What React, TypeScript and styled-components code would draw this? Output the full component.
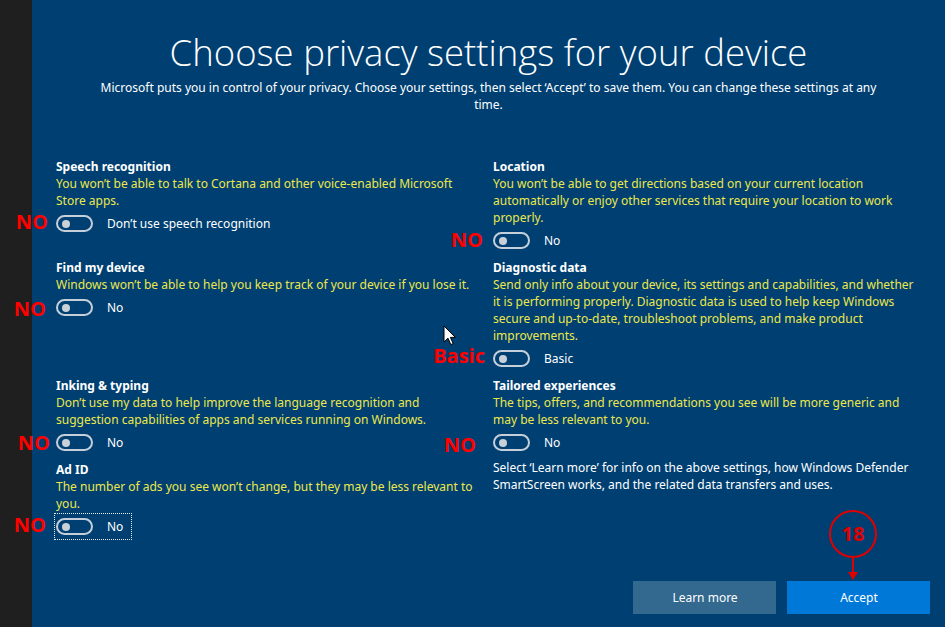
import React from "react";
import styled, { createGlobalStyle } from "styled-components";

const GlobalStyle = createGlobalStyle`
  html, body {
    margin: 0;
    padding: 0;
    background: #003f72;
  }
  body {
    font-family: "Noto Sans", "Open Sans", "Liberation Sans", sans-serif;
  }
`;

const Page = styled.div`
  display: flex;
  width: 945px;
  height: 627px;
  overflow: hidden;
`;

const Strip = styled.div`
  width: 32px;
  flex-shrink: 0;
  background: #1f1f1f;
`;

const Main = styled.div`
  position: relative;
  flex: 1;
  display: flex;
  flex-direction: column;
  background: #003f72;
  padding-top: 28px;
  color: #fff;
`;

const Title = styled.h1`
  margin: 0;
  font-family: "Open Sans", "Noto Sans", sans-serif;
  font-weight: 300;
  font-size: 36.5px;
  line-height: 48px;
  text-align: center;
  color: #fff;
`;

const Subtitle = styled.p`
  margin: 3px 0 0;
  font-size: 12px;
  line-height: 17px;
  text-align: center;
  white-space: pre-line;
`;

const Grid = styled.div`
  display: grid;
  grid-template-columns: 424px 424px;
  column-gap: 13px;
  row-gap: 5px;
  align-items: start;
  margin-top: 45px;
  padding-left: 24px;
`;

const Setting = styled.div`
  display: flex;
  flex-direction: column;
  align-items: flex-start;
`;

const SettingTitle = styled.div`
  font-size: 12px;
  line-height: 17px;
  font-weight: 700;
  color: #fff;
`;

const SettingDesc = styled.div`
  font-size: 12px;
  line-height: 17px;
  color: #ece84c;
  white-space: pre-line;
`;

const Note = styled.div`
  font-size: 12px;
  line-height: 17px;
  color: #fff;
  white-space: pre-line;
  margin-top: -2px;
`;

const ToggleRow = styled.div<{ $focused?: boolean }>`
  position: relative;
  display: inline-flex;
  align-items: center;
  margin-top: 1px;
  margin-left: -2px;
  padding: 4px 8px 4px 1px;
  border: 1px ${(p) => (p.$focused ? "dotted #e6ecf2" : "solid transparent")};
`;

const Switch = styled.span`
  position: relative;
  box-sizing: border-box;
  width: 37px;
  height: 17px;
  border: 2px solid #c5cfd9;
  border-radius: 9px;
`;

const Knob = styled.span`
  position: absolute;
  left: 4px;
  top: 2.5px;
  width: 8px;
  height: 8px;
  border-radius: 50%;
  background: #c9d1d8;
`;

const ToggleLabel = styled.span`
  margin-left: 14px;
  font-size: 12px;
  line-height: 17px;
  color: #fff;
`;

const Mark = styled.span<{ $gap: number; $dy: number }>`
  position: absolute;
  right: calc(100% - 1px + ${(p) => p.$gap}px);
  top: calc(50% - 13px + ${(p) => p.$dy}px);
  font-family: "Open Sans", "Noto Sans", sans-serif;
  font-weight: 700;
  font-size: 20px;
  line-height: 26px;
  color: #ff0000;
  white-space: nowrap;
`;

const Footer = styled.div`
  display: flex;
  justify-content: flex-end;
  gap: 11px;
  margin-top: auto;
  padding: 0 15px 13px 0;
`;

const Button = styled.button<{ $primary?: boolean }>`
  position: relative;
  width: 143px;
  height: 33px;
  border: none;
  padding: 0 0 0 1px;
  font-family: inherit;
  font-size: 12px;
  color: #fff;
  background: ${(p) => (p.$primary ? "#0078d7" : "#33688f")};
`;

const Callout = styled.svg`
  position: absolute;
  left: 40px;
  bottom: 100%;
  overflow: visible;
`;

const Cursor = styled.svg`
  position: absolute;
  left: 411px;
  top: 325px;
`;

type Item = {
  title: string;
  desc: string;
  label: string;
  mark: string;
  gap: number;
  dy: number;
  focused?: boolean;
};

const rows: [Item, Item | null][] = [
  [
    {
      title: "Speech recognition",
      desc: "You won’t be able to talk to Cortana and other voice-enabled Microsoft\nStore apps.",
      label: "Don’t use speech recognition",
      mark: "NO",
      gap: 8,
      dy: -2,
    },
    {
      title: "Location",
      desc: "You won’t be able to get directions based on your current location\nautomatically or enjoy other services that require your location to work\nproperly.",
      label: "No",
      mark: "NO",
      gap: 10,
      dy: -1,
    },
  ],
  [
    {
      title: "Find my device",
      desc: "Windows won’t be able to help you keep track of your device if you lose it.",
      label: "No",
      mark: "NO",
      gap: 10,
      dy: 1,
    },
    {
      title: "Diagnostic data",
      desc: "Send only info about your device, its settings and capabilities, and whether\nit is performing properly. Diagnostic data is used to help keep Windows\nsecure and up-to-date, troubleshoot problems, and make product\nimprovements.",
      label: "Basic",
      mark: "Basic",
      gap: 8,
      dy: -3,
    },
  ],
  [
    {
      title: "Inking & typing",
      desc: "Don’t use my data to help improve the language recognition and\nsuggestion capabilities of apps and services running on Windows.",
      label: "No",
      mark: "NO",
      gap: 6,
      dy: 0,
    },
    {
      title: "Tailored experiences",
      desc: "The tips, offers, and recommendations you see will be more generic and\nmay be less relevant to you.",
      label: "No",
      mark: "NO",
      gap: 17,
      dy: 2,
    },
  ],
  [
    {
      title: "Ad ID",
      desc: "The number of ads you see won’t change, but they may be less relevant to\nyou.",
      label: "No",
      mark: "NO",
      gap: 10,
      dy: -2,
      focused: true,
    },
    null,
  ],
];

const SettingBlock = ({ item }: { item: Item }) => (
  <Setting>
    <SettingTitle>{item.title}</SettingTitle>
    <SettingDesc>{item.desc}</SettingDesc>
    <ToggleRow $focused={item.focused}>
      <Mark $gap={item.gap} $dy={item.dy}>
        {item.mark}
      </Mark>
      <Switch>
        <Knob />
      </Switch>
      <ToggleLabel>{item.label}</ToggleLabel>
    </ToggleRow>
  </Setting>
);

const App = () => (
  <>
    <GlobalStyle />
    <Page>
      <Strip />
      <Main>
        <Title>Choose privacy settings for your device</Title>
        <Subtitle>
          {
            "Microsoft puts you in control of your privacy. Choose your settings, then select ‘Accept’ to save them. You can change these settings at any\ntime."
          }
        </Subtitle>
        <Grid>
          {rows.map(([left, right]) => (
            <React.Fragment key={left.title}>
              <SettingBlock item={left} />
              {right ? (
                <SettingBlock item={right} />
              ) : (
                <Note>
                  {
                    "Select ‘Learn more’ for info on the above settings, how Windows Defender\nSmartScreen works, and the related data transfers and uses."
                  }
                </Note>
              )}
            </React.Fragment>
          ))}
        </Grid>
        <Footer>
          <Button>Learn more</Button>
          <Button $primary>
            <Callout width="52" height="72" viewBox="0 0 52 72">
              <circle cx="26" cy="25" r="23" fill="none" stroke="#e00000" strokeWidth="2" />
              <text
                x="26"
                y="32"
                textAnchor="middle"
                fontFamily="Open Sans, Noto Sans, sans-serif"
                fontWeight="700"
                fontSize="20"
                fill="#e00000"
              >
                18
              </text>
              <line x1="26" y1="48" x2="26" y2="64" stroke="#e00000" strokeWidth="2" />
              <polygon points="21,63 31,63 26,71" fill="#e00000" />
            </Callout>
            Accept
          </Button>
        </Footer>
        <Cursor width="14" height="22" viewBox="0 0 14 22">
          <path
            d="M1 1 L1 17 L5 13.2 L7.8 19.6 L10.2 18.6 L7.4 12.4 L12.4 12.4 Z"
            fill="#fff"
            stroke="#000"
            strokeWidth="1"
            strokeLinejoin="miter"
          />
        </Cursor>
      </Main>
    </Page>
  </>
);

export default App;
